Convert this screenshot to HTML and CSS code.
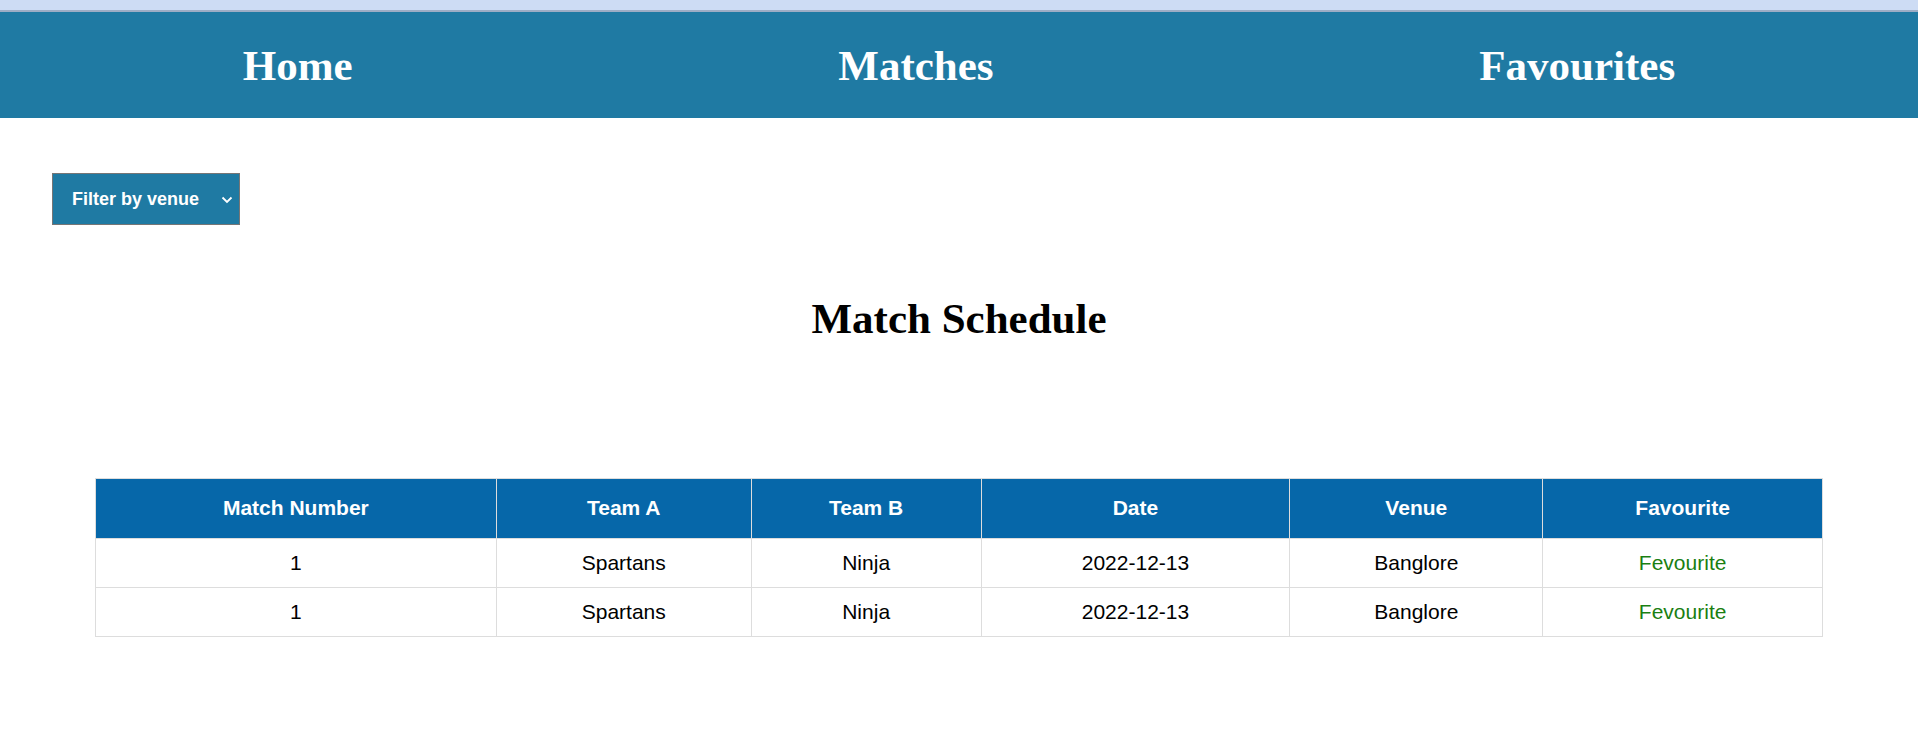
FILE: index.html
```html
<!DOCTYPE html>
<html lang="en">
<head>
<meta charset="utf-8">
<title>Match Schedule</title>
<link rel="stylesheet" href="styles.css">
</head>
<body>
<div class="topstrip"></div>
<nav class="nav">
  <a class="nav-link" href="#">Home</a>
  <a class="nav-link" href="#">Matches</a>
  <a class="nav-link" href="#">Favourites</a>
</nav>
<div class="filter">
  <div class="select-wrap">
    <select class="venue-select">
      <option>Filter by venue</option>
      <option>Banglore</option>
    </select>
    <svg class="chevron" width="12" height="8" viewBox="0 0 12 8"><path d="M1.5 1.5 L6 6 L10.5 1.5" fill="none" stroke="#ffffff" stroke-width="1.8"/></svg>
  </div>
</div>
<h1 class="title">Match Schedule</h1>
<table class="schedule">
  <thead>
    <tr>
      <th class="c-num">Match Number</th>
      <th class="c-a">Team A</th>
      <th class="c-b">Team B</th>
      <th class="c-date">Date</th>
      <th class="c-venue">Venue</th>
      <th class="c-fav">Favourite</th>
    </tr>
  </thead>
  <tbody>
    <tr>
      <td>1</td><td>Spartans</td><td>Ninja</td><td>2022-12-13</td><td>Banglore</td><td class="fav">Fevourite</td>
    </tr>
    <tr>
      <td>1</td><td>Spartans</td><td>Ninja</td><td>2022-12-13</td><td>Banglore</td><td class="fav">Fevourite</td>
    </tr>
  </tbody>
</table>
</body>
</html>
```

FILE: styles.css
```css
html, body {
  margin: 0;
  padding: 0;
  background: #ffffff;
}

body {
  font-family: "Liberation Serif", "Times New Roman", serif;
}

.topstrip {
  height: 10px;
  background: #cddcf4;
  border-bottom: 2px solid #9dadc5;
}

.nav {
  height: 106px;
  background: #1f7aa3;
  display: flex;
  justify-content: space-around;
  align-items: center;
}

.nav-link {
  color: #ffffff;
  text-decoration: none;
  font-family: "Liberation Serif", "Times New Roman", serif;
  font-weight: bold;
  font-size: 43px;
}

.filter {
  padding: 55px 0 0 52px;
}

.select-wrap {
  position: relative;
  display: inline-block;
  width: 188px;
  height: 52px;
}

.venue-select {
  appearance: none;
  -webkit-appearance: none;
  width: 188px;
  height: 52px;
  box-sizing: border-box;
  margin: 0;
  padding: 0 0 0 19px;
  border: 1px solid #767676;
  border-radius: 0;
  background: #1f7aa3;
  color: #ffffff;
  font-family: "Liberation Sans", Arial, sans-serif;
  font-weight: bold;
  font-size: 18px;
  outline: none;
}

.chevron {
  position: absolute;
  left: 169px;
  top: 23px;
  pointer-events: none;
}

.title {
  margin: 69px 0 0 0;
  text-align: center;
  font-family: "Liberation Serif", "Times New Roman", serif;
  font-weight: bold;
  font-size: 43px;
  line-height: normal;
  color: #000000;
}

.schedule {
  width: 90.1%;
  margin: 135px auto 0 auto;
  border-collapse: collapse;
  table-layout: fixed;
  font-family: "Liberation Sans", Arial, sans-serif;
  font-size: 21px;
  border: 1px solid #dddddd;
}

.schedule th,
.schedule td {
  box-sizing: border-box;
  border: 1px solid #dddddd;
  text-align: center;
  line-height: 24px;
}

.schedule th {
  background: #0667a9;
  color: #ffffff;
  font-weight: bold;
  padding: 17px 8px 18px 8px;
}

.schedule td {
  color: #000000;
  padding: 12px 8px;
}

.schedule td.fav {
  color: #1a7f12;
}

.c-num { width: 23.21%; }
.c-a { width: 14.76%; }
.c-b { width: 13.31%; }
.c-date { width: 17.88%; }
.c-venue { width: 14.64%; }
.c-fav { width: 16.2%; }
```
